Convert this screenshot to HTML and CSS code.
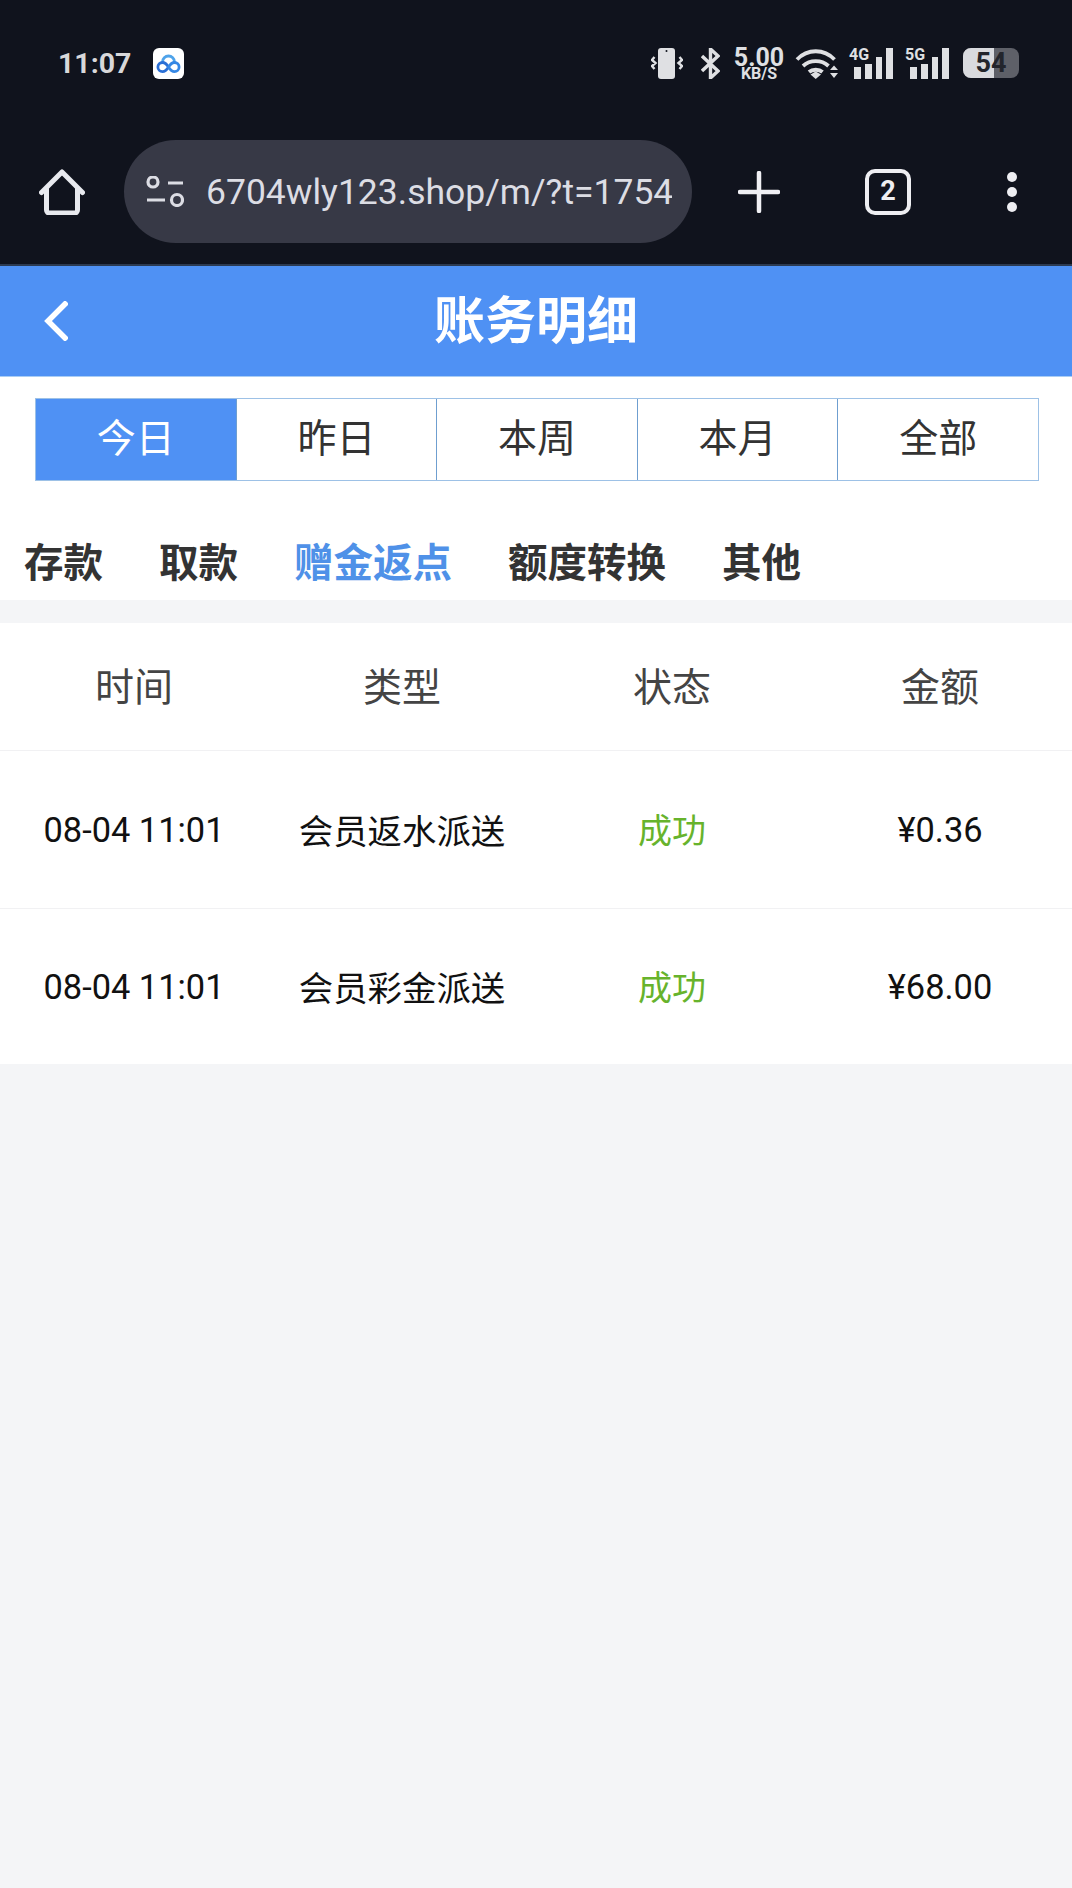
FILE: index.html
```html
<!DOCTYPE html>
<html lang="zh-CN">
<head>
    <meta charset="UTF-8">
    <meta name="viewport" content="width=device-width, initial-scale=1.0">
    <title>账务明细</title>
    <link rel="stylesheet" href="styles.css">
</head>
<body>

    <!-- Phone status bar + browser toolbar -->
    <div class="chrome">
        <div class="status-bar">
            <div class="status-left">
                <span class="clock">11:07</span>
                <span class="app-badge">
                    <svg width="25" height="20" viewBox="0 0 25 20" fill="none" stroke-width="2.800">
                        <path d="M6.500 8a6 6 0 0 1 12 0" stroke="#4fa3ea"/>
                        <path d="M12.500 13c-1.600-2.600-3.200-4.500-6-4.500a4.600 4.600 0 0 0 0 9.200c2.800 0 4.400-2 6-4.700z" stroke="#2a6fd6"/>
                        <path d="M12.500 13c1.600 2.700 3.200 4.700 6 4.700a4.600 4.600 0 0 0 0-9.200c-2.800 0-4.400 1.900-6 4.500z" stroke="#3587e4"/>
                    </svg>
                </span>
            </div>
            <div class="status-right">
                <svg class="ic-vibrate" width="32" height="31" viewBox="0 0 32 31" fill="none">
                    <rect x="7" y="0" width="17" height="31" rx="3" fill="#dfe0e3"/>
                    <circle cx="15.500" cy="3" r="1" fill="#10131d"/>
                    <path d="M3.500 9L1 12l3.500 3L1 18l2.500 3M28.500 9L31 12l-3.500 3 3.500 3-2.500 3" stroke="#dfe0e3" stroke-width="2.400"/>
                </svg>
                <svg class="ic-bt" width="19" height="31" viewBox="0 0 19 31" fill="none">
                    <path d="M1 8l16 15-7.500 7V1L17 8 1 23" stroke="#dfe0e3" stroke-width="3.400"/>
                </svg>
                <div class="speed">
                    <span class="speed-num">5.00</span>
                    <span class="speed-unit">KB/S</span>
                </div>
                <svg class="ic-wifi" width="44" height="31" viewBox="0 0 44 31" fill="none">
                    <path d="M2 11.500c10.500-11 27-11 37.500 0M8 18c7-6.500 18.500-6.500 25.500 0M14 24c3.500-3 10-3 13.500 0" stroke="#dfe0e3" stroke-width="3.800"/>
                    <path d="M15.500 26.500l5.200-3 5.300 3-5.300 4.500z" fill="#dfe0e3"/>
                    <path d="M35 22l4-4.500 4 4.500zM35 25h8l-4 5z" fill="#dfe0e3"/>
                </svg>
                <div class="signal">
                    <span class="signal-label">4G</span>
                    <span class="bar bar-1"></span><span class="bar bar-2"></span><span class="bar bar-3"></span><span class="bar bar-4"></span>
                </div>
                <div class="signal">
                    <span class="signal-label">5G</span>
                    <span class="bar bar-1"></span><span class="bar bar-2"></span><span class="bar bar-3"></span><span class="bar bar-4"></span>
                </div>
                <div class="battery">
                    <span class="battery-fill"></span>
                    <span class="battery-num">54</span>
                </div>
            </div>
        </div>

        <div class="toolbar">
            <svg class="ic-home" width="46" height="46" viewBox="0 0 46 46" fill="none" stroke="#e8e9ee" stroke-width="5" stroke-linecap="round" stroke-linejoin="round">
                <path d="M2.500 23.500L23 3l20.500 20.500"/>
                <path d="M7.500 20v21a3 3 0 0 0 3 3h25a3 3 0 0 0 3-3V20"/>
            </svg>
            <div class="url-pill">
                <svg class="ic-tune" width="38" height="31" viewBox="0 0 38 31" fill="none" stroke="#dcdde4" stroke-width="3.200">
                    <circle cx="7" cy="6" r="5"/>
                    <path d="M22 7h15M1 24h18"/>
                    <circle cx="31" cy="24" r="5.500"/>
                </svg>
                <div class="url-text">6704wly123.shop/m/?t=1754</div>
            </div>
            <svg class="ic-plus" width="42" height="42" viewBox="0 0 42 42" fill="none" stroke="#f0f0f4" stroke-width="4.500" stroke-linecap="round">
                <path d="M21 2v38M2 21h38"/>
            </svg>
            <div class="tab-count">2</div>
            <div class="more-dots"><span></span><span></span><span></span></div>
        </div>
    </div>

    <!-- Page header -->
    <div class="page-header">
        <svg class="ic-back" width="24" height="40" viewBox="0 0 24 40" fill="none" stroke="#fff" stroke-width="5.500" stroke-linecap="square">
            <path d="M21 3L4 20l17 17"/>
        </svg>
        <h1>账务明细</h1>
    </div>

    <!-- Date range -->
    <div class="range-wrap">
        <div class="range">
            <div class="range-item active">今日</div>
            <div class="range-item">昨日</div>
            <div class="range-item">本周</div>
            <div class="range-item">本月</div>
            <div class="range-item">全部</div>
        </div>
    </div>

    <!-- Category tabs -->
    <div class="cats">
        <div class="cat">存款</div>
        <div class="cat">取款</div>
        <div class="cat active">赠金返点</div>
        <div class="cat">额度转换</div>
        <div class="cat">其他</div>
    </div>

    <!-- Records -->
    <div class="records">
        <div class="row row-head">
            <div>时间</div>
            <div>类型</div>
            <div>状态</div>
            <div>金额</div>
        </div>
        <div class="row">
            <div>08-04 11:01</div>
            <div class="cjk">会员返水派送</div>
            <div class="ok">成功</div>
            <div>¥0.36</div>
        </div>
        <div class="row">
            <div>08-04 11:01</div>
            <div class="cjk">会员彩金派送</div>
            <div class="ok">成功</div>
            <div>¥68.00</div>
        </div>
    </div>

</body>
</html>
```

FILE: styles.css
```css
* {
    box-sizing: border-box;
}
html, body {
    height: 100%;
}
body {
    margin: 0;
    background-color: #f4f5f7;
    font-family: "Roboto", "Noto Sans CJK SC", sans-serif;
    color: #333;
}

/* top dark area */
.chrome {
    height: 266px;
    background-color: #10131d;
    border-bottom: 2px solid #2c3a50;
}
.status-bar {
    height: 140px;
    padding: 48px 53px 0 58px;
    display: flex;
    justify-content: space-between;
    align-items: flex-start;
}
.status-left {
    display: flex;
    align-items: center;
    gap: 22px;
    height: 31px;
}
.clock {
    font-size: 28.5px;
    font-weight: 700;
    color: #d8d8da;
}
.app-badge {
    width: 31px;
    height: 31px;
    background-color: #fff;
    border-radius: 6px;
    display: flex;
    align-items: center;
    justify-content: center;
}
.status-right {
    display: flex;
    align-items: flex-start;
    height: 31px;
    color: #dfe0e3;
}
.ic-bt {
    margin-left: 18px;
}
.speed {
    margin-left: 13px;
    width: 52px;
    display: flex;
    flex-direction: column;
    align-items: center;
    font-weight: 700;
}
.speed-num {
    font-size: 25px;
    line-height: 19px;
}
.speed-unit {
    font-size: 16px;
    line-height: 13px;
}
.ic-wifi {
    margin-left: 10px;
}
.signal {
    margin-left: 10px;
    width: 44px;
    height: 31px;
    display: flex;
    align-items: flex-end;
    gap: 4px;
    position: relative;
}
.signal + .signal {
    margin-left: 12px;
}
.signal-label {
    position: absolute;
    left: 0;
    top: -2px;
    font-size: 16px;
    line-height: 18px;
    font-weight: 700;
}
.bar {
    width: 7px;
    background-color: #dfe0e3;
}
.bar-1 {
    height: 12px;
    margin-left: 5px;
}
.bar-2 {
    height: 15px;
}
.bar-3 {
    height: 22px;
}
.bar-4 {
    height: 31px;
}
.battery {
    margin-left: 14px;
    width: 56px;
    height: 30px;
    border-radius: 8px;
    background-color: #5e6068;
    position: relative;
    overflow: hidden;
    text-align: center;
}
.battery-fill {
    position: absolute;
    left: 0;
    top: 0;
    bottom: 0;
    width: 31px;
    background-color: #d9dade;
}
.battery-num {
    position: relative;
    font-size: 27px;
    line-height: 30px;
    font-weight: 700;
    color: #23252c;
}

.toolbar {
    height: 103px;
    display: flex;
    align-items: center;
}
.ic-home {
    margin-left: 39px;
    flex: none;
}
.url-pill {
    margin-left: 39px;
    width: 568px;
    height: 103px;
    border-radius: 52px;
    background-color: #373946;
    display: flex;
    align-items: center;
    padding-left: 22px;
    flex: none;
}
.url-text {
    margin-left: 22px;
    width: 466px;
    overflow: hidden;
    white-space: nowrap;
    font-size: 35.5px;
    color: #dcdde4;
}
.ic-plus {
    margin-left: 46px;
    flex: none;
}
.tab-count {
    margin-left: 85px;
    width: 46px;
    height: 46px;
    border: 4.5px solid #eeeef2;
    border-radius: 10px;
    color: #eeeef2;
    font-size: 27px;
    font-weight: 700;
    text-align: center;
    line-height: 37px;
    flex: none;
}
.more-dots {
    margin-left: 96px;
    display: flex;
    flex-direction: column;
    gap: 5px;
}
.more-dots span {
    width: 10px;
    height: 10px;
    border-radius: 50%;
    background-color: #eeeef2;
}

/* header */
.page-header {
    height: 111px;
    padding-bottom: 8px;
    background-color: #4f91f4;
    display: flex;
    align-items: center;
    justify-content: center;
    position: relative;
    border-bottom: 1px solid #a9cdf5;
}
.ic-back {
    position: absolute;
    left: 44px;
    top: 35px;
}
.page-header h1 {
    margin: 0;
    font-size: 51px;
    font-weight: 700;
    color: #fff;
}

/* date range */
.range-wrap {
    background-color: #fff;
    padding: 21px 33px 0 35px;
}
.range {
    display: flex;
    height: 83px;
    border: 1px solid #9dc1e6;
}
.range-item {
    flex: 1;
    font-size: 39px;
    line-height: 80px;
    text-align: center;
    color: #333;
    border-left: 1px solid #6f9fd0;
}
.range-item:first-child {
    border-left: none;
}
.range-item.active {
    background-color: #4f91f4;
    color: #fff;
}

/* categories */
.cats {
    background-color: #fff;
    height: 119px;
    padding: 55px 0 0 24px;
    display: flex;
    gap: 56px;
}
.cat {
    font-size: 39.5px;
    line-height: 56px;
    font-weight: 700;
    color: #333;
}
.cat.active {
    color: #4f91e8;
}

/* table */
.records {
    margin-top: 23px;
    background-color: #fff;
}
.row {
    display: grid;
    grid-template-columns: 268px 268px 272px 264px;
    align-items: center;
    height: 158px;
    text-align: center;
    font-size: 34.4px;
    color: #111;
    border-top: 1px solid #f1f1f3;
}
.row:last-child {
    height: 156px;
}
.row-head {
    height: 127px;
    padding-bottom: 5px;
    border-top: none;
    font-size: 39px;
    color: #444;
}
.cjk {
    padding-bottom: 2px;
}
.ok {
    padding-bottom: 3px;
    font-size: 34px;
    color: #67b32c;
}
```
